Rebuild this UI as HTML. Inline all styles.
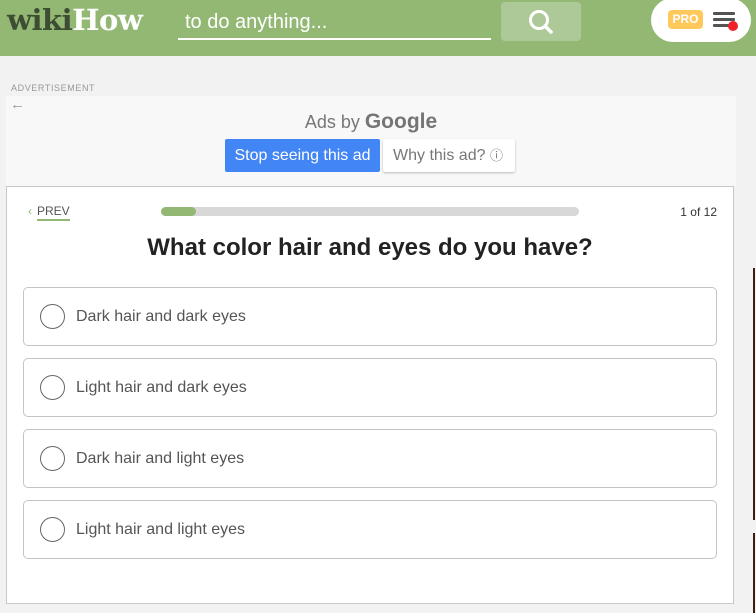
<!DOCTYPE html>
<html><head><meta charset="utf-8"><style>
*{margin:0;padding:0;box-sizing:border-box}
body{width:756px;height:613px;background:#f2f2f2;font-family:"Liberation Sans",Arial,sans-serif;position:relative;overflow:hidden}
.hdr{position:absolute;left:0;top:0;width:756px;height:56px;background:#93b874}
.logo{position:absolute;left:7px;top:3px;font-family:"DejaVu Serif",serif;font-weight:bold;font-size:29px;letter-spacing:-0.5px}
.logo .w{color:#3d4d33}.logo .h{color:#fff}
.search{position:absolute;left:178px;top:9px;width:313px;height:31px;border-bottom:2px solid #fff;color:#fff;font-size:20px;padding:2px 0 0 7px}
.sbtn{position:absolute;left:501px;top:2px;width:80px;height:39px;background:#adc998;border-radius:4px}
.pill{position:absolute;left:651px;top:-2px;width:100px;height:44px;background:#fff;border-radius:22px}
.pro{position:absolute;left:17px;top:12px;width:35px;height:19px;background:#ffc85a;border-radius:4px;color:#fff;font-weight:bold;font-size:12px;text-align:center;line-height:19px}
.bar{position:absolute;left:62px;width:22px;height:3px;background:#545454;border-radius:1px}
.adv{position:absolute;left:11px;top:83px;font-size:9px;color:#999;letter-spacing:0.6px}
.ad{position:absolute;left:6px;top:96px;width:730px;height:90px;background:#f8f8f8}
.adsby{position:absolute;left:0;width:100%;top:14px;text-align:center;color:#777;font-size:18px}
.adsby b{font-size:21px;color:#757575}
.stop{position:absolute;left:219px;top:43px;width:155px;height:33px;background:#4285f4;color:#fff;font-size:16px;line-height:33px;text-align:center;border-radius:2px}
.why{position:absolute;left:377px;top:43px;width:132px;height:33px;background:#fff;color:#777;font-size:16px;line-height:33px;padding-left:10px;border-radius:2px;box-shadow:0 1px 2px rgba(0,0,0,.25)}
.card{position:absolute;left:6px;top:186px;width:728px;height:418px;background:#fff;border:1px solid #c8c8c8}
.prev{position:absolute;left:21px;top:17px;font-size:12px;color:#555}
.prev span{color:#93b874;margin-right:5px}
.prev u{text-decoration:none;border-bottom:2px solid #93b874;padding-bottom:1px}
.prog{position:absolute;left:154px;top:20px;width:418px;height:9px;background:#d8d8d8;border-radius:5px}
.prog div{width:35px;height:9px;background:#93b874;border-radius:5px}
.cnt{position:absolute;right:16px;top:18px;font-size:12px;color:#333}
.q{position:absolute;left:0;width:100%;top:47px;text-align:center;font-size:24px;font-weight:bold;color:#222}
.opt{position:absolute;left:16px;width:694px;height:59px;border:1px solid #c4c4c4;border-radius:5px;font-size:16px;color:#555}
.opt i{position:absolute;left:16px;top:16px;width:25px;height:25px;border:1.5px solid #666;border-radius:50%}
.opt span{position:absolute;left:52px;top:20px}
.rl{position:absolute;left:753px;width:2px;background:#3a1e12}
</style></head><body>
<div class="hdr">
<div class="logo"><span class="w">wiki</span><span class="h">How</span></div>
<div class="search">to do anything...</div>
<div class="sbtn"><svg width="80" height="39"><circle cx="38" cy="18" r="8.5" fill="none" stroke="#fff" stroke-width="3"/><path d="M44 24l6 6" stroke="#fff" stroke-width="3.5" stroke-linecap="round"/></svg></div>
<div class="pill"><div class="pro">PRO</div>
<div class="bar" style="top:14px"></div><div class="bar" style="top:20px"></div><div class="bar" style="top:26px"></div>
<div style="position:absolute;left:77px;top:23px;width:10px;height:10px;background:#f0212a;border-radius:50%"></div></div>
</div>
<div class="adv">ADVERTISEMENT</div>
<div class="ad">
<div style="position:absolute;left:4px;top:0px;color:#999;font-size:15px">&#8592;</div>
<div class="adsby">Ads by <b>Google</b></div>
<div class="stop">Stop seeing this ad</div>
<div class="why">Why this ad? <span style="font-size:13px">&#9432;</span></div>
</div>
<div class="card">
<div class="prev"><span>&#8249;</span><u>PREV</u></div>
<div class="prog"><div></div></div>
<div class="cnt">1 of 12</div>
<div class="q">What color hair and eyes do you have?</div>
<div class="opt" style="top:100px"><i></i><span>Dark hair and dark eyes</span></div>
<div class="opt" style="top:171px"><i></i><span>Light hair and dark eyes</span></div>
<div class="opt" style="top:242px"><i></i><span>Dark hair and light eyes</span></div>
<div class="opt" style="top:313px"><i></i><span>Light hair and light eyes</span></div>
</div>
<div class="rl" style="top:268px;height:252px"></div>
<div class="rl" style="top:533px;height:80px"></div>
</body></html>
